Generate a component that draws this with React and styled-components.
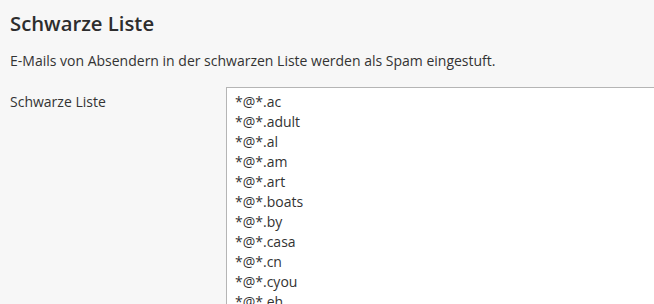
import React from "react";
import styled, { createGlobalStyle } from "styled-components";

const Global = createGlobalStyle`
  html, body { margin: 0; padding: 0; background: #f7f7f7; }
  body { font-family: "Open Sans", "Liberation Sans", sans-serif; color: #333; }
`;

const Page = styled.div`
  padding: 10px 10px 0 10px;
  overflow: hidden;
  height: 304px;
  box-sizing: border-box;
`;

const Title = styled.h2`
  margin: 0;
  font-size: 20.3px;
  font-weight: 600;
  line-height: 26px;
  color: #2d2d2d;
`;

const Desc = styled.p`
  margin: 15px 0 0 0;
  font-size: 14px;
  line-height: 20px;
`;

const Row = styled.div`
  display: grid;
  grid-template-columns: 216px 460px;
  margin-top: 16px;
`;

const Label = styled.label`
  font-size: 14px;
  line-height: 20px;
  padding-top: 5px;
`;

const Area = styled.div`
  background: #fff;
  border: 1px solid #b5b5b5;
  padding: 4px 8px;
  font-size: 14px;
  line-height: 20px;
  height: 260px;
  color: #333;
`;

const Line = styled.div``;

const items = ["ac", "adult", "al", "am", "art", "boats", "by", "casa", "cn", "cyou", "eh"];

export default function App() {
  return (
    <Page>
      <Global />
      <Title>Schwarze Liste</Title>
      <Desc>E-Mails von Absendern in der schwarzen Liste werden als Spam eingestuft.</Desc>
      <Row>
        <Label>Schwarze Liste</Label>
        <Area>
          {items.map((t) => (
            <Line key={t}>*@*.{t}</Line>
          ))}
        </Area>
      </Row>
    </Page>
  );
}
